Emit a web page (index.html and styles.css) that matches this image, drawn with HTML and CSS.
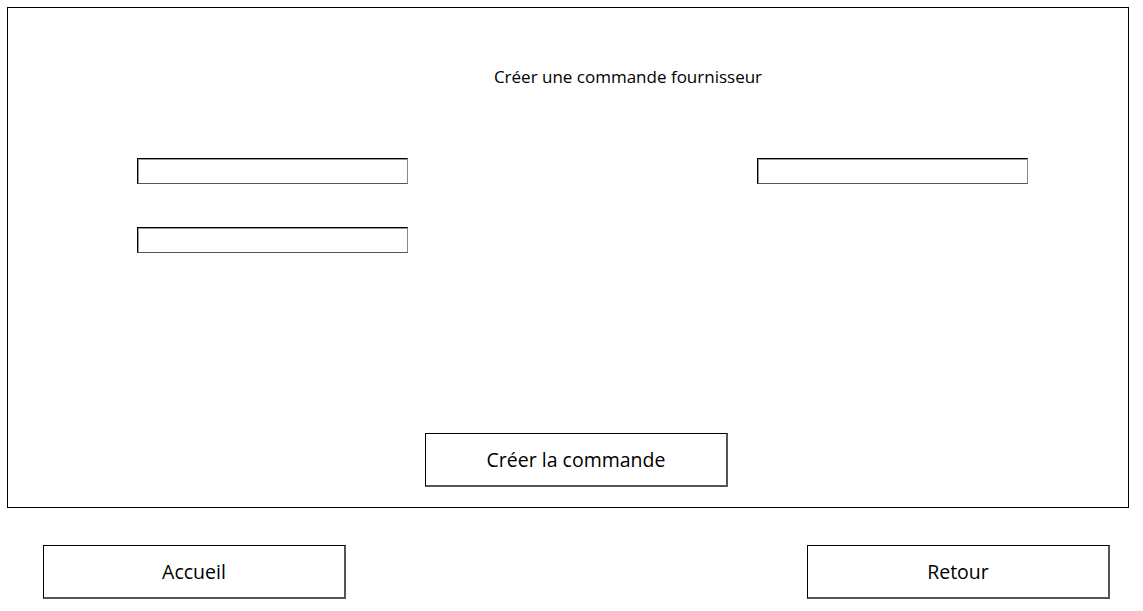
FILE: index.html
```html
<!DOCTYPE html>
<html>
<head>
  <title>Créer une commande fournisseur</title>
  <link rel="stylesheet" href="styles.css">
</head>
<body>
  <div class="container">
    <h1 class="title">Créer une commande fournisseur</h1>

    <div class="fields">
      <div class="field-column">
        <input type="text" id="fournisseur" name="fournisseur">
        <input type="text" id="produit" name="produit">
      </div>
      <div class="field-column">
        <input type="text" id="quantite" name="quantite">
      </div>
    </div>

    <div class="submit-row">
      <button type="submit" class="btn">Créer la commande</button>
    </div>
  </div>

  <div class="nav">
    <button class="btn" onclick="location.href='#accueil'">Accueil</button>
    <button class="btn" onclick="history.back()">Retour</button>
  </div>
</body>
</html>
```

FILE: styles.css
```css
body {
  font-family: "Open Sans", "Noto Sans", sans-serif;
  margin: 0;
  padding: 7px;
  background-color: #fff;
  color: #000;
}

.container {
  display: flex;
  flex-direction: column;
  width: 1122px;
  height: 501px;
  box-sizing: border-box;
  border: 1px solid #000;
  padding: 57px 0 20px 0;
}

.title {
  margin: 0;
  padding-left: 120px;
  font-size: 17px;
  font-weight: normal;
  line-height: 23px;
  text-align: center;
}

.fields {
  display: flex;
  justify-content: space-between;
  margin-top: 70px;
  padding: 0 100px 0 129px;
}

.field-column {
  display: flex;
  flex-direction: column;
  gap: 43px;
}

.field-column input[type="text"] {
  width: 271px;
  height: 26px;
  box-sizing: border-box;
  margin: 0;
  border: 1px solid #000;
  border-right-color: #888;
  border-bottom-color: #555;
  box-shadow: inset 1px 1px 0 #999;
  background-color: #fff;
}

.submit-row {
  display: flex;
  margin-top: auto;
  padding-left: 417px;
}

.btn {
  width: 303px;
  height: 54px;
  box-sizing: border-box;
  margin: 0;
  padding: 0;
  font-family: inherit;
  font-size: 19.5px;
  color: #000;
  background-color: #fff;
  border: 1px solid #000;
  border-right: 2px solid #555;
  border-bottom: 2px solid #555;
  cursor: pointer;
}

.nav {
  display: flex;
  justify-content: space-between;
  width: 1122px;
  box-sizing: border-box;
  margin-top: 37px;
  padding: 0 19px 0 36px;
}
```
